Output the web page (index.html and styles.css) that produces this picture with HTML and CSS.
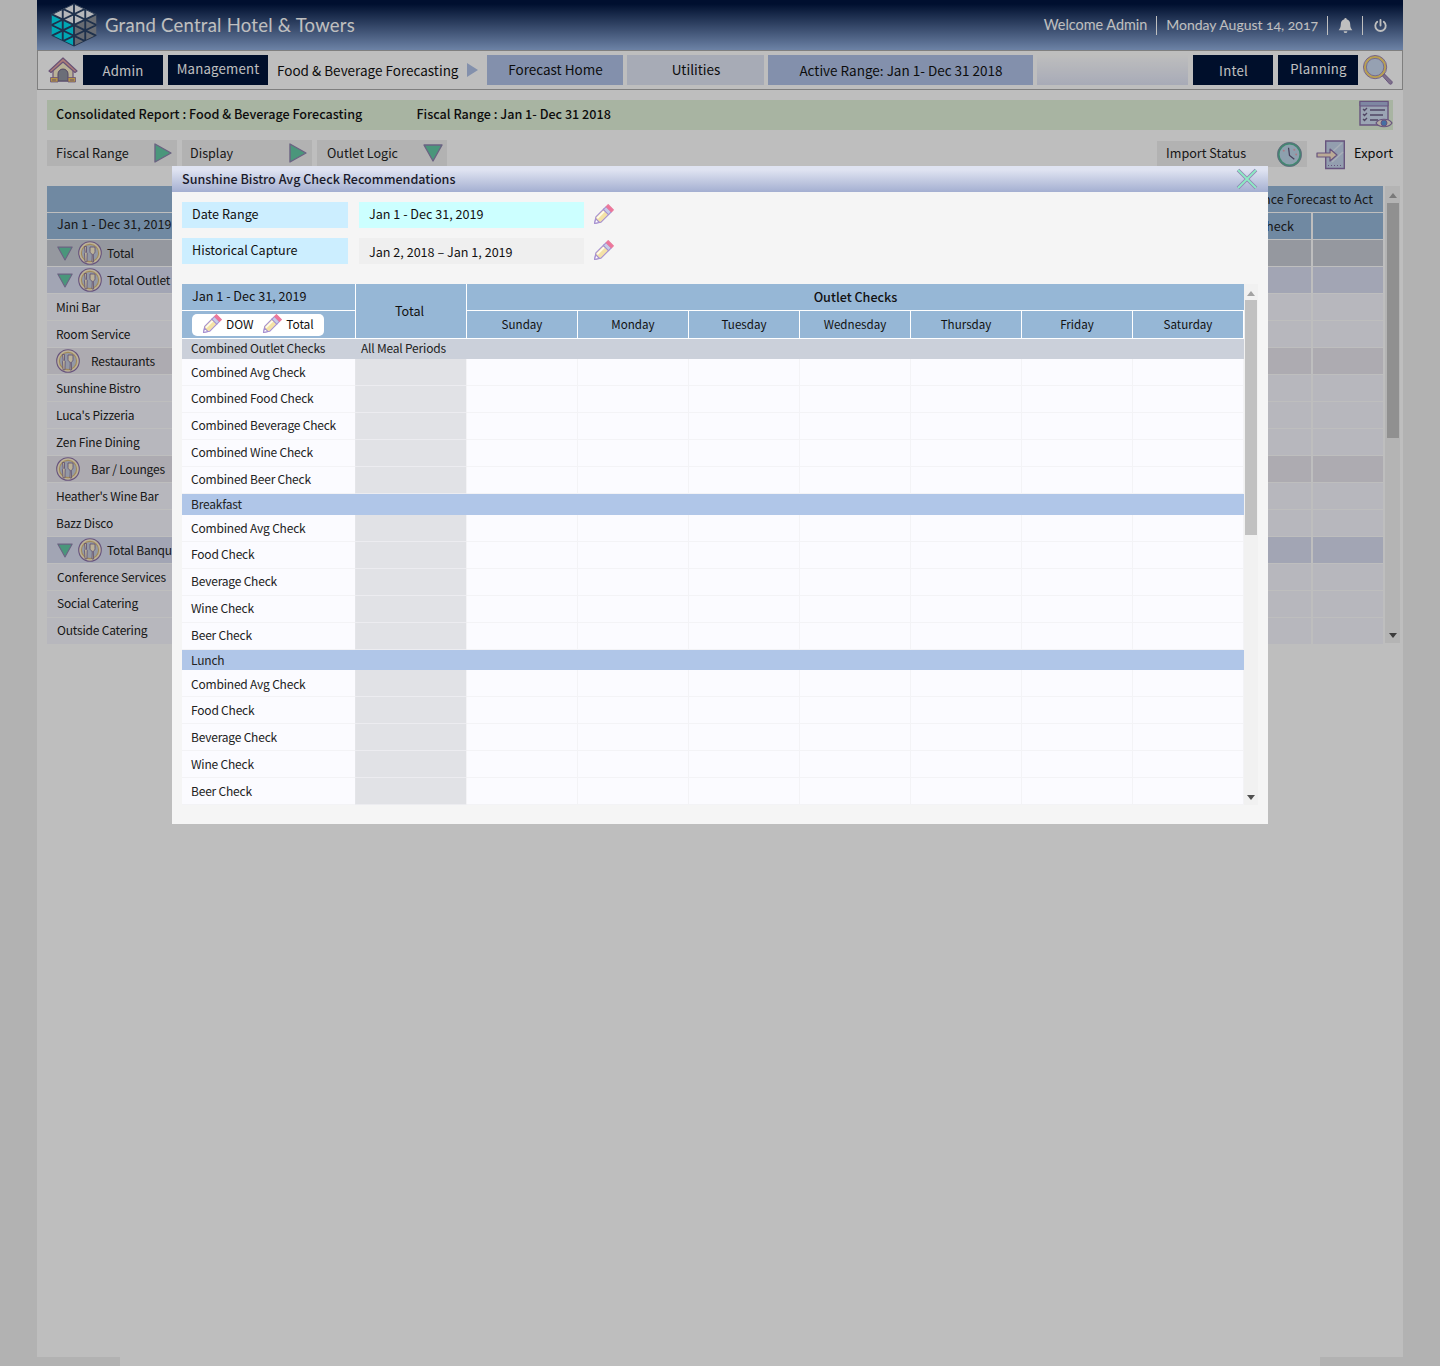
FILE: index.html
```html
<!DOCTYPE html>
<html lang="en">
<head>
<meta charset="utf-8">
<title>Sunshine Bistro Avg Check Recommendations</title>
<link rel="stylesheet" href="styles.css">
</head>
<body>
<svg class="defs" aria-hidden="true">
  <defs>
    <clipPath id="hexclip"><path d="M23 .4 45.5 11.2V32.8L23 43.6 .5 32.8V11.2Z"/></clipPath>
    <symbol id="logo" viewBox="0 0 46 44">
      <g clip-path="url(#hexclip)">
        <path fill="#f3f4f8" d="M23 .4 45.5 11.2 23 22 .5 11.2Z"/>
        <path fill="#00dff0" d="M.5 11.2 23 22V43.6L.5 32.8Z"/>
        <path fill="#8a8f98" d="M45.5 11.2V32.8L23 43.6V22Z"/>
        <path fill="none" stroke="#2a4266" stroke-width="1.9" d="M11.75 0V44M23 0V44M34.25 0V44M0-10.64 46 11.44M0 .16 46 22.24M0 10.96 46 33.04M0 21.76 46 43.84M0 32.56 46 54.64M0 11.44 46-10.64M0 22.24 46 .16M0 33.04 46 10.96M0 43.84 46 21.76M0 54.64 46 32.56"/>
      </g>
    </symbol>
    <symbol id="home" viewBox="0 0 30 26">
      <path fill="#f7ecc8" stroke="#8d6f9e" stroke-width="1.2" d="M5 12 15 3l10 9v12H5Z"/>
      <path fill="#e8a6a0" stroke="#8d6f9e" stroke-width="1.2" stroke-linejoin="round" d="M1 14 15 1l14 13-2 1.500L15 5 3 15.500Z"/>
      <path fill="#8f93a0" stroke="#6d5f86" d="M10 24v-7a5 5 0 0 1 10 0v7Z"/>
      <path fill="#f0c65c" stroke="#8d6f9e" stroke-width=".8" d="M2.500 20.500h7.500V25H2.500ZM20 20.500h7.500V25H20Z"/>
      <path stroke="#8d6f9e" d="M4 23h4M22 23h4"/>
    </symbol>
    <symbol id="pencil" viewBox="0 0 24 24">
      <g transform="rotate(45 12 12)" stroke="#a58fd0" stroke-width="1.200" stroke-linejoin="round">
        <path fill="#f4e2a6" d="M8 7h8v12l-4 6-4-6Z"/>
        <path fill="#fffbe8" stroke="none" d="M9 8h2v11H9Z"/>
        <path fill="#fff" d="M9.300 20.500h5.400L12 25Z"/>
        <path fill="#c7cbe8" d="M8 3h8v4.500H8Z"/>
        <path fill="#f0749a" stroke="#e87a9c" d="M8 0h8v3H8Z"/>
      </g>
    </symbol>
    <symbol id="plate" viewBox="0 0 24 24">
      <circle cx="12" cy="12" r="11.300" fill="#fbeecb" stroke="#8a70a8" stroke-width="1.100"/>
      <circle cx="12" cy="12" r="8.600" fill="#c5cbdc" stroke="#d8b878" stroke-width="1.100"/>
      <path fill="#fbeecb" stroke="#7a6696" stroke-width=".8" d="M6.500 5.500h2v5.800l.7 1-.3 8.500H7l-.5-8.500.7-1Z"/>
      <path fill="#fbeecb" stroke="#7a6696" stroke-width=".8" d="M12 6h5v4.500c0 1.600-1 2.500-1.700 2.700l.3 7.800H14l.3-7.800c-.8-.2-2.300-1.100-2.300-2.700Z"/>
    </symbol>
    <symbol id="tri-r" viewBox="0 0 18 20">
      <path fill="#63c9a5" stroke="#8f84ae" stroke-width="1.400" stroke-linejoin="round" d="M1 1 17 10 1 19Z"/>
    </symbol>
    <symbol id="tri-d" viewBox="0 0 20 18">
      <path fill="#63c9a5" stroke="#8f84ae" stroke-width="1.400" stroke-linejoin="round" d="M1 1H19L10 17Z"/>
    </symbol>
    <symbol id="clock" viewBox="0 0 26 26">
      <circle cx="13" cy="13" r="11.500" fill="#bcd6e8" stroke="#58b596" stroke-width="2.400"/>
      <circle cx="13" cy="13" r="12.500" fill="none" stroke="#8f84ae" stroke-width=".8"/>
      <path fill="none" stroke="#5f5478" stroke-width="1.300" d="M12 6 13 14 18 18"/>
      <circle cx="18" cy="8" r="1" fill="#e8a0b0"/><circle cx="20" cy="13" r="1" fill="#e8a0b0"/><circle cx="7" cy="9" r="1" fill="#e8a0b0"/>
    </symbol>
    <symbol id="export" viewBox="0 0 30 30">
      <path fill="#c5d3ea" stroke="#8a70a8" stroke-width="1.400" d="M9.700 1H28.300V28.500H9.700Z"/>
      <path fill="none" stroke="#dfe8f5" stroke-width="1.500" d="M14 14 26 3M16 22 27 12"/>
      <path fill="#f8e3c8" stroke="#8a70a8" stroke-width="1.200" stroke-linejoin="round" d="M1 13h13V9l7 6-7 6v-4H1Z"/>
      <path stroke="#8a70a8" stroke-dasharray="1 2" d="M12 25.500H27"/>
    </symbol>
    <symbol id="list-eye" viewBox="0 0 34 30">
      <path fill="#cfdcf0" stroke="#8a70a8" stroke-width="1.400" d="M1 1.500H29V25H1Z"/>
      <path fill="#a8b4d8" stroke="#8a70a8" d="M1 1.500H29V6H1Z"/>
      <path fill="none" stroke="#6d5f86" stroke-width="1.300" d="M4 9l1.500 1.500L8 8M4 14l1.500 1.500L8 13M4 19l1.500 1.500L8 18M11 10H26M11 15H24M11 20H19"/>
      <path fill="#efe6d8" stroke="#8a70a8" stroke-width="1.200" d="M17 23c3-5 13-5 16 0-3 5-13 5-16 0Z"/>
      <circle cx="25" cy="23" r="3" fill="#5d94d8" stroke="#8a70a8"/>
    </symbol>
    <symbol id="mag" viewBox="0 0 31 31">
      <path fill="#a896b8" stroke="#8a70a8" d="M20 21.500 22 19.500 30 27.500c.8 2-1 3.200-2.500 2.500Z"/>
      <circle cx="12.500" cy="12.500" r="10.500" fill="#c9d7ee" stroke="#f6d46e" stroke-width="2.200"/>
      <circle cx="12.500" cy="12.500" r="12" fill="none" stroke="#8a70a8" stroke-width=".9"/>
      <circle cx="12.500" cy="12.500" r="9" fill="none" stroke="#8a70a8" stroke-width=".7"/>
    </symbol>
    <symbol id="close" viewBox="0 0 22 22">
      <path stroke="#9385b5" stroke-width="3.600" d="M2 2 20 20M20 2 2 20"/>
      <path stroke="#8cecc4" stroke-width="1.800" d="M2 2 20 20M20 2 2 20"/>
    </symbol>
    <symbol id="bell" viewBox="0 0 16 16">
      <path fill="#fff" d="M8 0a1.200 1.200 0 0 1 1.200 1.300C11.700 1.900 13 4 13 6.500c0 3.500 1 5 2.300 6.500H.7C2 11.500 3 10 3 6.500 3 4 4.300 1.900 6.800 1.300A1.200 1.200 0 0 1 8 0ZM6 14h4a2 2 0 0 1-4 0Z"/>
    </symbol>
    <symbol id="power" viewBox="0 0 14 14">
      <path fill="none" stroke="#fff" stroke-width="2" stroke-linecap="round" d="M7 1V7M3.500 3A5.600 5.600 0 1 0 10.500 3"/>
    </symbol>
  </defs>
</svg>

<div class="app">
  <header class="topbar">
    <div class="brand">
      <svg class="logo"><use href="#logo"/></svg>
      <span class="brand-name">Grand Central Hotel &amp; Towers</span>
    </div>
    <div class="userbar">
      <span class="ub-item ub-welcome">Welcome Admin</span>
      <span class="ub-item ub-date">Monday August 14, 2017</span>
      <span class="ub-item ub-icon"><svg class="ic-bell"><use href="#bell"/></svg></span>
      <span class="ub-item ub-icon ub-last"><svg class="ic-power"><use href="#power"/></svg></span>
    </div>
  </header>

  <nav class="navbar">
    <svg class="ic-home"><use href="#home"/></svg>
    <a class="nav-dark w80 ml5">Admin</a>
    <a class="nav-dark nav-up w100 ml5">Management</a>
    <span class="crumb">Food &amp; Beverage Forecasting</span>
    <span class="crumb-arrow"></span>
    <a class="nav-blue nav-up w136">Forecast Home</a>
    <a class="nav-grey nav-up w137">Utilities</a>
    <a class="nav-blue w265">Active Range: Jan 1- Dec 31 2018</a>
    <span class="nav-blank"></span>
    <a class="nav-dark w80">Intel</a>
    <a class="nav-dark nav-up w80 ml5">Planning</a>
    <svg class="ic-mag"><use href="#mag"/></svg>
  </nav>

  <main class="content">
    <div class="reportbar">
      <span class="rb-title">Consolidated Report : Food &amp; Beverage Forecasting</span>
      <span class="rb-range">Fiscal Range : Jan 1- Dec 31 2018</span>
      <svg class="ic-listeye"><use href="#list-eye"/></svg>
    </div>

    <div class="filters">
      <div class="filter"><span>Fiscal Range</span><svg class="ic-tri-r"><use href="#tri-r"/></svg></div>
      <div class="filter filter-d"><span>Display</span><svg class="ic-tri-r"><use href="#tri-r"/></svg></div>
      <div class="filter filter-o"><span>Outlet Logic</span><svg class="ic-tri-d"><use href="#tri-d"/></svg></div>
      <div class="filter-right">
        <div class="import"><span>Import Status</span><svg class="ic-clock"><use href="#clock"/></svg></div>
        <svg class="ic-export"><use href="#export"/></svg>
        <span class="export-label">Export</span>
      </div>
    </div>

    <div class="report">
      <div class="rtable">
        <div class="rrow r-head"><div class="rc rc-main"></div><div class="rc rc-wide">Variance Forecast to Act</div></div>
        <div class="rrow r-head"><div class="rc rc-main rc-range">Jan 1 - Dec 31, 2019</div><div class="rc rc-a">Check</div><div class="rc rc-b"></div></div>
        <div class="rrow r-total"><div class="rc rc-main"><svg class="ic-tri-sm"><use href="#tri-d"/></svg><svg class="ic-plate"><use href="#plate"/></svg><span>Total</span></div><div class="rc rc-a"></div><div class="rc rc-b"></div></div>
        <div class="rrow r-sub"><div class="rc rc-main"><svg class="ic-tri-sm"><use href="#tri-d"/></svg><svg class="ic-plate"><use href="#plate"/></svg><span>Total Outlet</span></div><div class="rc rc-a"></div><div class="rc rc-b"></div></div>
        <div class="rrow"><div class="rc rc-main">Mini Bar</div><div class="rc rc-a"></div><div class="rc rc-b"></div></div>
        <div class="rrow"><div class="rc rc-main">Room Service</div><div class="rc rc-a"></div><div class="rc rc-b"></div></div>
        <div class="rrow r-group"><div class="rc rc-main"><svg class="ic-plate ic-plate-g"><use href="#plate"/></svg><span>Restaurants</span></div><div class="rc rc-a"></div><div class="rc rc-b"></div></div>
        <div class="rrow"><div class="rc rc-main">Sunshine Bistro</div><div class="rc rc-a"></div><div class="rc rc-b"></div></div>
        <div class="rrow"><div class="rc rc-main">Luca's Pizzeria</div><div class="rc rc-a"></div><div class="rc rc-b"></div></div>
        <div class="rrow"><div class="rc rc-main">Zen Fine Dining</div><div class="rc rc-a"></div><div class="rc rc-b"></div></div>
        <div class="rrow r-group"><div class="rc rc-main"><svg class="ic-plate ic-plate-g"><use href="#plate"/></svg><span>Bar / Lounges</span></div><div class="rc rc-a"></div><div class="rc rc-b"></div></div>
        <div class="rrow"><div class="rc rc-main">Heather's Wine Bar</div><div class="rc rc-a"></div><div class="rc rc-b"></div></div>
        <div class="rrow"><div class="rc rc-main">Bazz Disco</div><div class="rc rc-a"></div><div class="rc rc-b"></div></div>
        <div class="rrow r-sub"><div class="rc rc-main"><svg class="ic-tri-sm"><use href="#tri-d"/></svg><svg class="ic-plate"><use href="#plate"/></svg><span>Total Banquet</span></div><div class="rc rc-a"></div><div class="rc rc-b"></div></div>
        <div class="rrow r-indent"><div class="rc rc-main">Conference Services</div><div class="rc rc-a"></div><div class="rc rc-b"></div></div>
        <div class="rrow r-indent r-lift"><div class="rc rc-main">Social Catering</div><div class="rc rc-a"></div><div class="rc rc-b"></div></div>
        <div class="rrow r-indent r-lift"><div class="rc rc-main">Outside Catering</div><div class="rc rc-a"></div><div class="rc rc-b"></div></div>
      </div>
      <div class="sbar sbar-page">
        <span class="sb-up"></span>
        <span class="sb-thumb"></span>
        <span class="sb-down"></span>
      </div>
    </div>
  </main>
</div>
<div class="foot"></div>

<div class="overlay"></div>

<section class="modal">
  <div class="modal-title">
    <span>Sunshine Bistro Avg Check Recommendations</span>
    <svg class="ic-close"><use href="#close"/></svg>
  </div>
  <div class="modal-body">
    <div class="mfield">
      <span class="mf-label">Date Range</span>
      <span class="mf-value mf-cyan">Jan 1 - Dec 31, 2019</span>
      <svg class="ic-pencil"><use href="#pencil"/></svg>
    </div>
    <div class="mfield mfield-2">
      <span class="mf-label">Historical Capture</span>
      <span class="mf-value mf-grey">Jan 2, 2018 – Jan 1, 2019</span>
      <svg class="ic-pencil"><use href="#pencil"/></svg>
    </div>

    <div class="gridwrap">
      <div class="cgrid">
        <div class="h h-range">Jan 1 - Dec 31, 2019</div>
        <div class="h h-total">Total</div>
        <div class="h h-span">Outlet Checks</div>
        <div class="h h-edit"><span class="pill"><svg class="ic-pencil-sm"><use href="#pencil"/></svg><span class="pill-t">DOW</span><svg class="ic-pencil-sm pill-gap"><use href="#pencil"/></svg><span class="pill-t">Total</span></span></div>
        <div class="h h-day">Sunday</div><div class="h h-day">Monday</div><div class="h h-day">Tuesday</div><div class="h h-day">Wednesday</div><div class="h h-day">Thursday</div><div class="h h-day">Friday</div><div class="h h-day">Saturday</div>

        <div class="sec sec-grey"><span class="sec-a">Combined Outlet Checks</span><span>All Meal Periods</span></div>
        <div class="c l f">Combined Avg Check</div><div class="c t"></div><div class="c"></div><div class="c"></div><div class="c"></div><div class="c"></div><div class="c"></div><div class="c"></div><div class="c"></div>
        <div class="c l">Combined Food Check</div><div class="c t"></div><div class="c"></div><div class="c"></div><div class="c"></div><div class="c"></div><div class="c"></div><div class="c"></div><div class="c"></div>
        <div class="c l">Combined Beverage Check</div><div class="c t"></div><div class="c"></div><div class="c"></div><div class="c"></div><div class="c"></div><div class="c"></div><div class="c"></div><div class="c"></div>
        <div class="c l">Combined Wine Check</div><div class="c t"></div><div class="c"></div><div class="c"></div><div class="c"></div><div class="c"></div><div class="c"></div><div class="c"></div><div class="c"></div>
        <div class="c l">Combined Beer Check</div><div class="c t"></div><div class="c"></div><div class="c"></div><div class="c"></div><div class="c"></div><div class="c"></div><div class="c"></div><div class="c"></div>

        <div class="sec sec-blue">Breakfast</div>
        <div class="c l f">Combined Avg Check</div><div class="c t"></div><div class="c"></div><div class="c"></div><div class="c"></div><div class="c"></div><div class="c"></div><div class="c"></div><div class="c"></div>
        <div class="c l">Food Check</div><div class="c t"></div><div class="c"></div><div class="c"></div><div class="c"></div><div class="c"></div><div class="c"></div><div class="c"></div><div class="c"></div>
        <div class="c l">Beverage Check</div><div class="c t"></div><div class="c"></div><div class="c"></div><div class="c"></div><div class="c"></div><div class="c"></div><div class="c"></div><div class="c"></div>
        <div class="c l">Wine Check</div><div class="c t"></div><div class="c"></div><div class="c"></div><div class="c"></div><div class="c"></div><div class="c"></div><div class="c"></div><div class="c"></div>
        <div class="c l">Beer Check</div><div class="c t"></div><div class="c"></div><div class="c"></div><div class="c"></div><div class="c"></div><div class="c"></div><div class="c"></div><div class="c"></div>

        <div class="sec sec-blue sec-lunch">Lunch</div>
        <div class="c l f">Combined Avg Check</div><div class="c t"></div><div class="c"></div><div class="c"></div><div class="c"></div><div class="c"></div><div class="c"></div><div class="c"></div><div class="c"></div>
        <div class="c l">Food Check</div><div class="c t"></div><div class="c"></div><div class="c"></div><div class="c"></div><div class="c"></div><div class="c"></div><div class="c"></div><div class="c"></div>
        <div class="c l">Beverage Check</div><div class="c t"></div><div class="c"></div><div class="c"></div><div class="c"></div><div class="c"></div><div class="c"></div><div class="c"></div><div class="c"></div>
        <div class="c l">Wine Check</div><div class="c t"></div><div class="c"></div><div class="c"></div><div class="c"></div><div class="c"></div><div class="c"></div><div class="c"></div><div class="c"></div>
        <div class="c l">Beer Check</div><div class="c t"></div><div class="c"></div><div class="c"></div><div class="c"></div><div class="c"></div><div class="c"></div><div class="c"></div><div class="c"></div>
      </div>
      <div class="sbar sbar-modal">
        <span class="sb-up"></span>
        <span class="sb-thumb"></span>
        <span class="sb-down"></span>
      </div>
    </div>
  </div>
</section>
</body>
</html>
```

FILE: styles.css
```css
* { box-sizing: border-box; }
html, body { margin: 0; height: 1366px; overflow: hidden; }
body {
  position: relative;
  background: #eeeeee;
  color: #222;
  font: 12px/18px "Noto Sans CJK SC", "Noto Sans", "Liberation Sans", sans-serif;
}
svg { display: block; flex: none; }
.defs { position: absolute; width: 0; height: 0; }

.app { width: 1366px; height: 1357px; margin: 0 auto; background: #fefefe; }
.foot { width: 1200px; height: 9px; margin: 0 auto; background: #fefefe; }

/* top bar */
.topbar {
  height: 51px;
  display: flex;
  align-items: center;
  justify-content: space-between;
  background: linear-gradient(#00153f 0, #00153f 8%, #91aedd 100%);
  color: #fff;
  border-bottom: 1px solid #aaa;
}
.brand { display: flex; align-items: center; padding-left: 14px; }
.logo { width: 46px; height: 44px; }
.brand-name { margin-left: 8px; font: 18.500px/24px Lato, "Open Sans", sans-serif; letter-spacing: .25px; }
.userbar { display: flex; align-items: center; padding-right: 16px; font: 14.400px/18px Lato, "Open Sans", sans-serif; }
.ub-item { display: flex; align-items: center; height: 19px; padding: 0 9px; border-right: 1px solid #fff; white-space: nowrap; }
.ub-date { font-size: 14px; letter-spacing: -.02px; font-variant-numeric: oldstyle-nums; }
.ub-icon { padding: 0 9px 0 10px; }
.ub-last { border-right: 0; padding: 0 0 0 11px; }
.ic-bell { width: 15px; height: 15px; }
.ic-power { width: 13px; height: 13px; }

/* nav */
.navbar {
  height: 39px;
  display: flex;
  align-items: center;
  padding: 4px 9px 4px 10px;
  border: 1px solid #aaa;
  border-width: 0 1px 1px;
  font-size: 13.500px;
}
.navbar a { display: flex; flex: none; height: 30px; align-items: center; justify-content: center; padding-bottom: 1px; }
.navbar a.nav-dark { padding: 1px 0 0; }
.navbar a.nav-up { padding: 0 0 3px; }
.ic-home { width: 30px; height: 26px; }
.nav-dark { background: #00153a; color: #fff; font-size: 13.200px; letter-spacing: .2px; }
.nav-blue { background: #afc1e6; color: #111; }
.nav-grey { background: #dfe4f3; color: #111; margin: 0 4px; }
.w80 { width: 80px; }
.w100 { width: 100px; }
.w136 { width: 136px; }
.w137 { width: 137px; }
.w265 { width: 265px; }
.ml5 { margin-left: 5px; }
.crumb { margin-left: 9px; padding-bottom: 1px; color: #111; white-space: nowrap; }
.crumb-arrow {
  flex: none;
  width: 0; height: 0;
  margin: 0 9px 0 9px;
  border-left: 11px solid #afc1e6;
  border-top: 7.500px solid transparent;
  border-bottom: 7.500px solid transparent;
}
.nav-blank { flex: none; width: 151px; height: 30px; margin: 0 5px 0 4px; background: linear-gradient(#fdfdfd, #e0e4f5); }
.ic-mag { width: 30px; height: 30px; margin-left: 5px; }

/* content */
.content { padding: 10px 10px 0; }
.reportbar {
  height: 30px;
  display: flex;
  align-items: center;
  padding-left: 9px;
  background: #e1f0d8;
  color: #111;
  font-size: 12.600px;
  font-weight: 500;
  white-space: nowrap;
}
.reportbar span { padding-bottom: 2px; }
.rb-range { margin-left: 54px; }
.ic-listeye { width: 34px; height: 30px; margin-left: auto; }

.filters { height: 28px; margin-top: 10px; display: flex; gap: 5px; }
.filter {
  width: 130px; height: 26px;
  display: flex; align-items: center; justify-content: space-between;
  padding: 0 5px 0 9px;
  background: #eeeeee;
  font-size: 12.600px;
  color: #222;
}
.filter-d { padding-left: 8px; }
.filter-o { padding: 0 4px 0 10px; }
.ic-tri-r { width: 18px; height: 20px; }
.ic-tri-d { width: 20px; height: 18px; }
.filter-right { margin-left: auto; display: flex; align-items: flex-start; font-size: 12.600px; }
.import {
  width: 150px; height: 26px; margin-top: 1px;
  display: flex; align-items: center; justify-content: space-between;
  padding: 0 5px 0 9px;
  background: #eeeeee;
}
.import span { padding-bottom: 2px; }
.ic-clock { width: 25px; height: 25px; }
.ic-export { width: 30px; height: 30px; margin-left: 9px; }
.export-label { margin-left: 8px; line-height: 26px; color: #111; font-size: 12.800px; }

/* background report */
.report { display: flex; margin-top: 18px; }
.rtable { width: 1336px; flex: none; letter-spacing: -.2px; }
.rrow { display: flex; height: 27px; background: #f5f5fd; border-bottom: 1px solid #fefefe; }
.rc { display: flex; align-items: center; border-right: 2px solid #fefefe; }
.rc:last-child { border-right: 0; }
.rc-main { flex: 1; padding-left: 9px; overflow: hidden; white-space: nowrap; }
.rc-wide { width: 200px; justify-content: flex-end; padding-right: 10px; white-space: nowrap; }
.rc-a { width: 75px; justify-content: center; padding-left: 3px; }
.rc-b { width: 70px; }
.r-head { background: #96b7d9; font-size: 12.600px; letter-spacing: 0; }
.r-head .rc-main { padding: 0 0 0 10px; }
.r-head .rc-range { padding: 0 0 5px 10px; }
.r-total { background: #c7cbd4; }
.r-sub { background: #d8dcf0; }
.r-group { background: #e7e4ec; }
.r-indent .rc-main { padding-left: 10px; }
.r-lift .rc-main { padding-bottom: 2px; }
.ic-tri-sm { width: 16px; height: 15px; margin-right: 5px; }
.ic-plate { width: 24px; height: 24px; margin-right: 5px; }
.ic-plate-g { margin-right: 11px; }
.r-total .rc-main, .r-sub .rc-main { padding-left: 10px; }

.sbar { display: flex; flex-direction: column; align-items: center; width: 15px; flex: none; position: relative; }
.sbar-page { margin-left: 2px; height: 457px; background: #f1f1f1; }
.sb-up, .sb-down { position: absolute; left: 3px; width: 0; height: 0; border-left: 4.500px solid transparent; border-right: 4.500px solid transparent; }
.sb-up { top: 7px; border-bottom: 5px solid #a3a3a3; }
.sb-down { bottom: 5px; border-top: 5px solid #505050; }
.sbar-page .sb-up, .sbar-page .sb-down { left: 4px; }
.sb-thumb { width: 12px; height: 235px; margin-top: 17px; background: #c1c1c1; }

/* overlay + modal */
.overlay { position: absolute; inset: 0; background: rgba(0, 0, 0, .25); }
.modal {
  position: absolute;
  left: 172px; top: 166px;
  width: 1096px; height: 658px;
  background: #f5f5f5;
}
.modal-title {
  height: 26px;
  display: flex; align-items: center; justify-content: space-between;
  padding: 0 10px;
  background: linear-gradient(#dfe3f1 0, #dfe3f1 15%, #a4afd1 100%);
  color: #1a1a2a;
  font-size: 12.550px;
  font-weight: 500;
}
.ic-close { width: 22px; height: 22px; }
.modal-body { padding: 10px 10px 0; }
.mfield { display: flex; align-items: center; height: 26px; font-size: 12.600px; color: #111; }
.mfield-2 { margin-top: 10px; }
.mf-label { width: 166px; height: 26px; line-height: 24px; padding-left: 10px; background: #cceeff; }
.mf-value { width: 225px; height: 26px; margin-left: 11px; padding-left: 10px; line-height: 24px; }
.mf-cyan { background: #ccffff; }
.mf-grey { background: #efefef; line-height: 28px; }
.ic-pencil { width: 22px; height: 22px; margin-left: 8px; }

.gridwrap { display: flex; height: 521px; margin-top: 20px; }
.cgrid {
  display: grid;
  width: 1062px;
  flex: none;
  grid-template-columns: 174px repeat(8, 111px);
  grid-template-rows: 27px 28px 19.500px repeat(5, 27px) 21px repeat(5, 27px) 20.500px repeat(5, 27px);
  color: #222;
}
.h { display: flex; align-items: center; justify-content: center; background: #96b7d6; border-right: 1px solid #fff; border-bottom: 1px solid #fff; color: #111; font-size: 12.600px; }
.h-range { justify-content: flex-start; padding: 0 0 2px 10px; }
.h-total { grid-row: 1 / span 2; grid-column: 2; padding-right: 3px; }
.h-span { grid-column: 3 / -1; font-weight: 500; border-right: 0; }
.h-edit { grid-row: 2; grid-column: 1; justify-content: flex-start; padding-left: 10px; }
.h-day { grid-row: 2; font-size: 11.600px; padding-bottom: 1px; }
.h-day:nth-last-child(1) { border-right: 0; }
.pill { display: flex; align-items: center; height: 22px; width: 132px; padding-left: 9px; background: #fff; border-radius: 5px; font-size: 12px; letter-spacing: -.1px; }
.pill-t { margin-left: 4px; padding-bottom: 2px; }
.ic-pencil-sm { width: 21px; height: 21px; }
.pill-gap { margin-left: 8px; }
.sec { grid-column: 1 / -1; display: flex; align-items: center; padding: 0 0 1px 9px; white-space: nowrap; letter-spacing: -.2px; }
.sec-grey { background: #cbd0da; }
.sec-a { width: 170px; }
.sec-blue { background: #b0c6e8; }
.sec-lunch { padding-bottom: 0; }
.c { background: #fbfbff; border-right: 1px solid #f3f3f6; border-bottom: 1px solid #f3f3f6; }
.c.l { display: flex; align-items: center; padding: 0 0 1px 9px; letter-spacing: -.2px; border-right: 1px solid #e4e5e9; white-space: nowrap; }
.c.l.f { padding: 1px 0 0 9px; }
.c.t { background: #e1e2e6; border-right-color: #f3f3f6; border-bottom-color: #ececf0; }
.sbar-modal { margin-left: 0; height: 521px; width: 14px; background: #f1f1f1; }
.sbar-modal .sb-thumb { margin-top: 16px; }
```
